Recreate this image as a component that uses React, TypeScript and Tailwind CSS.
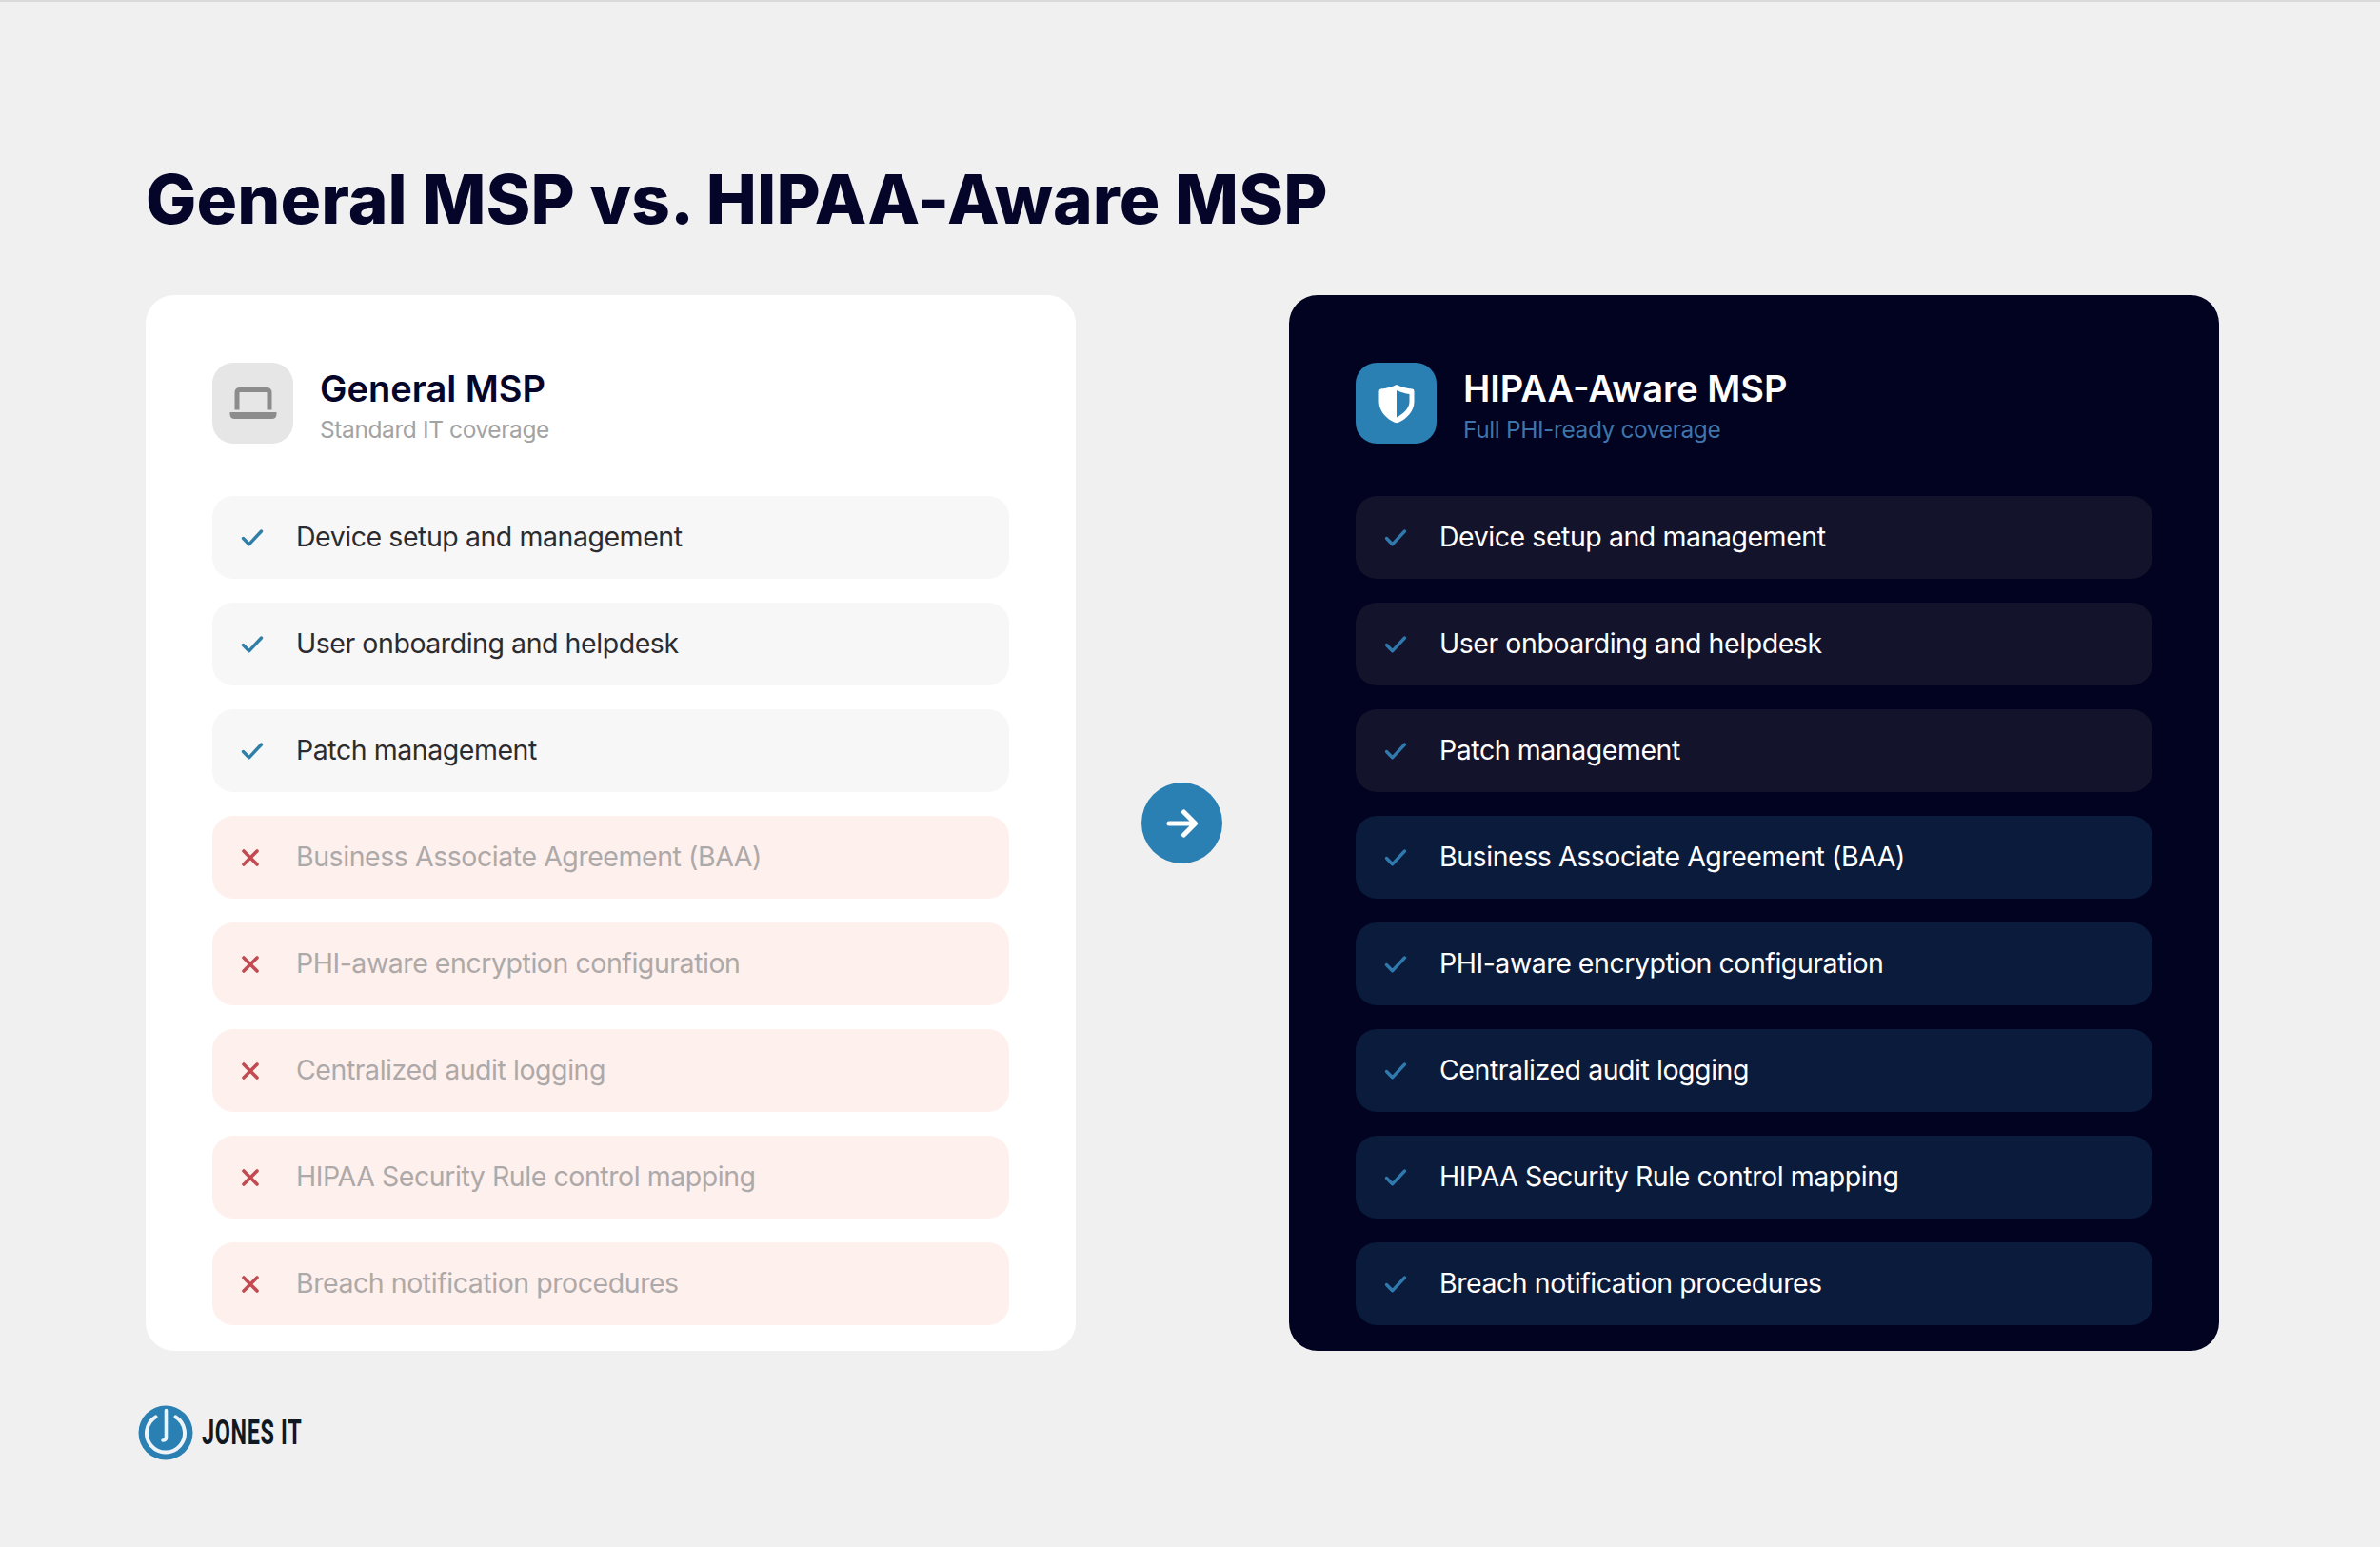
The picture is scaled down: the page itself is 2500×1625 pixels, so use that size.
const common = ["Device setup and management", "User onboarding and helpdesk", "Patch management"];
const extra = [
  "Business Associate Agreement (BAA)",
  "PHI-aware encryption configuration",
  "Centralized audit logging",
  "HIPAA Security Rule control mapping",
  "Breach notification procedures",
];

function Check({ color }: { color: string }) {
  return (
    <svg width="24" height="20" viewBox="0 0 24 20" fill="none" stroke={color} strokeWidth="3.4" strokeLinecap="round" strokeLinejoin="round" aria-hidden="true">
      <path d="M2.5 10.5 L8.6 16.8 L21.5 3" />
    </svg>
  );
}

function Cross() {
  return (
    <svg width="20" height="20" viewBox="0 0 20 20" fill="none" stroke="#c14b52" strokeWidth="3.6" strokeLinecap="round" aria-hidden="true">
      <path d="M3 3 L17 17 M17 3 L3 17" />
    </svg>
  );
}

function Row({ text, bg, textClass, icon }: { text: string; bg: string; textClass: string; icon: React.ReactNode }) {
  return (
    <div className={`flex h-[87px] items-center rounded-[22px] pl-[30px] ${bg}`}>
      <span className="flex w-[58px] shrink-0 items-center">{icon}</span>
      <span className={`pt-[0.5px] text-[28.5px] tracking-[-0.45px] ${textClass}`}>{text}</span>
    </div>
  );
}

function Laptop() {
  return (
    <svg width="52" height="34" viewBox="0 0 52 34" fill="none" aria-hidden="true">
      <path d="M9 23.5 V5.5 Q9 2.5 12 2.5 H40 Q43 2.5 43 5.5 V23.5" stroke="#8c8c8c" strokeWidth="5" />
      <path d="M1.5 26 H50.5 V28 Q50.5 33 45.5 33 H6.5 Q1.5 33 1.5 28 Z" fill="#8c8c8c" />
    </svg>
  );
}

function Shield() {
  return (
    <svg width="38" height="42" viewBox="0 0 38 42" aria-hidden="true">
      <path
        d="M19 1 C24 3.5 30 5.2 35.5 5.6 Q37.5 5.8 37.5 8 V19 C37.5 29 29 37.5 21 40.8 Q19 41.6 17 40.8 C9 37.5 0.5 29 0.5 19 V8 Q0.5 5.8 2.5 5.6 C8 5.2 14 3.5 19 1 Z"
        fill="#ffffff"
      />
      <path d="M19 7 C23.5 9 28 10.4 32.5 11 V19 C32.5 25.5 26 32 19 35.5 Z" fill="#2a7fb3" />
    </svg>
  );
}

function Card({
  dark,
  title,
  subtitle,
  icon,
  children,
}: {
  dark: boolean;
  title: string;
  subtitle: string;
  icon: React.ReactNode;
  children: React.ReactNode;
}) {
  return (
    <section className={`flex h-[1109px] w-[976.5px] shrink-0 flex-col rounded-[30px] pl-[70px] pr-[70px] pt-[71px] ${dark ? "bg-[#020221]" : "bg-white"}`}>
      <header className="flex h-[85px] items-start gap-[28px]">
        <div className={`flex h-[85px] w-[85px] shrink-0 items-center justify-center rounded-[22px] ${dark ? "bg-[#2a7fb3]" : "bg-[#e6e6e6]"}`}>{icon}</div>
        <div className="flex flex-col pt-[4px]">
          <h2 className={`text-[38px] font-semibold leading-[46px] tracking-[0px] ${dark ? "text-white" : "text-[#05052a]"}`}>{title}</h2>
          <p className={`mt-[3px] text-[24.5px] leading-[34px] tracking-[-0.4px] ${dark ? "text-[#3f74a9]" : "text-[#a3a3a3]"}`}>{subtitle}</p>
        </div>
      </header>
      <div className="mt-[55px] flex flex-col gap-[25px]">{children}</div>
    </section>
  );
}

export default function App() {
  return (
    <div className="h-[1625px] w-[2500px] overflow-hidden border-t-2 border-[#dadada] bg-[#f0f0f0] pl-[153px] font-['Inter','Liberation_Sans',sans-serif]">
      <h1 className="mt-[164px] text-[71px] font-extrabold leading-[86px] tracking-[0.1px] text-[#05052a]">General MSP vs. HIPAA-Aware MSP</h1>
      <main className="mt-[58px] flex items-center gap-[69.75px]">
        <Card dark={false} title="General MSP" subtitle="Standard IT coverage" icon={<Laptop />}>
          {common.map((t) => (
            <Row key={t} text={t} bg="bg-[#f7f7f7]" textClass="text-[#2c2c30]" icon={<Check color="#2f7fa8" />} />
          ))}
          {extra.map((t) => (
            <Row key={t} text={t} bg="bg-[#fdf0ed]" textClass="text-[#aea9a9]" icon={<Cross />} />
          ))}
        </Card>
        <div className="flex h-[85px] w-[85px] shrink-0 items-center justify-center rounded-full bg-[#2a7fb3]">
          <svg width="34" height="30" viewBox="0 0 34 30" fill="none" stroke="#fff" strokeWidth="5" strokeLinecap="round" strokeLinejoin="round" aria-hidden="true">
            <path d="M3 15 H30 M18.5 3 L30.5 15 L18.5 27" />
          </svg>
        </div>
        <Card dark title="HIPAA-Aware MSP" subtitle="Full PHI-ready coverage" icon={<Shield />}>
          {common.map((t) => (
            <Row key={t} text={t} bg="bg-[#13132b]" textClass="text-white" icon={<Check color="#3079ad" />} />
          ))}
          {extra.map((t) => (
            <Row key={t} text={t} bg="bg-[#0b1b3c]" textClass="text-white" icon={<Check color="#3079ad" />} />
          ))}
        </Card>
      </main>
      <footer className="-ml-[8px] mt-[57px] flex items-center gap-[9px]">
        <svg width="58" height="58" viewBox="0 0 58 58" aria-label="Jones IT logo">
          <circle cx="29" cy="29" r="28.5" fill="#2a7fb3" />
          <path d="M18.5 12.4 A20 20 0 1 0 39.5 12.4" fill="none" stroke="#eef3f7" strokeWidth="4" strokeLinecap="round" />
          <path d="M29.5 5.5 V34 Q29.5 37 26 37" fill="none" stroke="#eef3f7" strokeWidth="3.6" strokeLinecap="round" />
        </svg>
        <span className="origin-left scale-x-[0.65] whitespace-nowrap font-['Roboto','Liberation_Sans',sans-serif] text-[36px] font-bold leading-none tracking-[1px] text-[#12181f]">JONES IT</span>
      </footer>
    </div>
  );
}
